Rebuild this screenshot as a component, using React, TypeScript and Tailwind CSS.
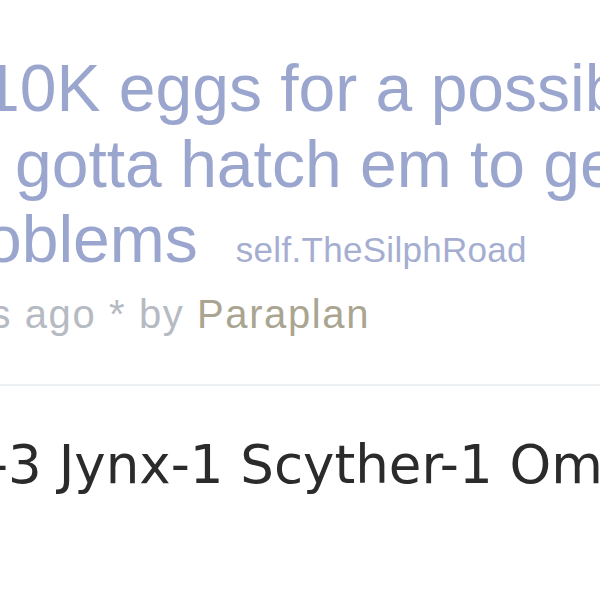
import React from 'react';

const App: React.FC = () => {
  return (
    <div className="w-[600px] h-[600px] overflow-hidden bg-white font-['Liberation_Sans',Arial,sans-serif]">
      {/* Post title */}
      <div className="pt-[51px] text-[66px] leading-[75.5px] text-[#9ba6cf] whitespace-nowrap">
        <div className="ml-[-17px]">10K eggs for a possible</div>
        <div className="ml-[15px]">gotta hatch em to get</div>
        <div className="ml-[-15px]">
          oblems
          <span className="ml-[38px] text-[35px] tracking-[0.3px] text-[#a5aed1]">self.TheSilphRoad</span>
        </div>
      </div>

      {/* Tagline */}
      <div className="mt-[2px] ml-[-96px] text-[40px] leading-[48px] tracking-[1.6px] text-[#b6bac2] whitespace-nowrap">
        hours ago * by <span className="text-[#aaa590]">Paraplan</span>
      </div>

      <div className="mt-[46px] h-[2px] bg-[#eef1f4]" />

      {/* Post body */}
      <div className="mt-[48px] ml-[-11px] text-[53px] leading-[62px] text-[#2b2b2b] whitespace-nowrap font-['DejaVu_Sans',Verdana,sans-serif]">
        -3 Jynx-1 Scyther-1 Omanyte-1
      </div>
    </div>
  );
};

export default App;
